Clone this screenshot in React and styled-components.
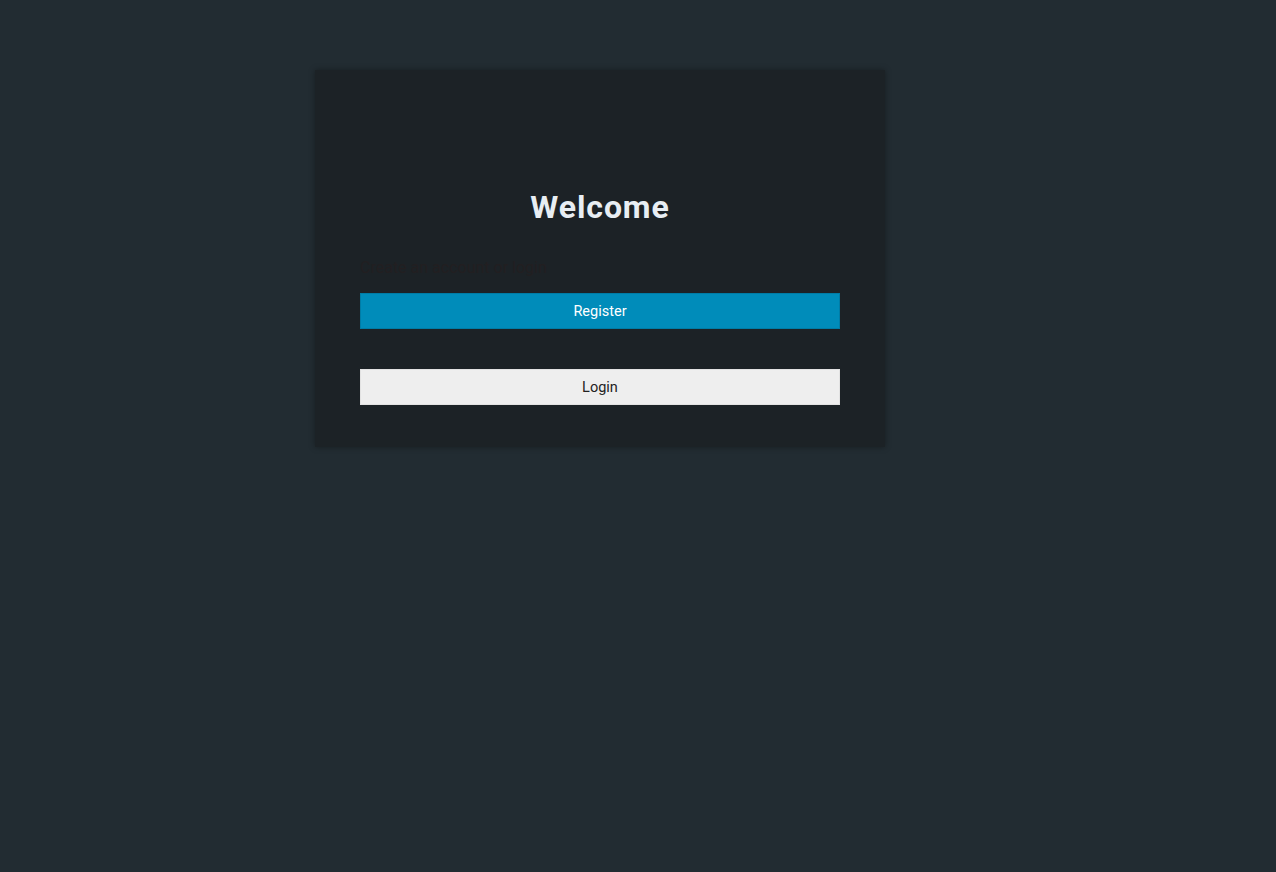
import styled, { createGlobalStyle } from "styled-components";

const GlobalStyle = createGlobalStyle`
  html, body {
    margin: 0;
    padding: 0;
    background: #222c32;
    font-family: Roboto, "Liberation Sans", sans-serif;
  }
`;

const Page = styled.div`
  min-height: 872px;
  display: flex;
  justify-content: center;
  align-items: flex-start;
  padding-top: 70px;
  padding-right: 76px;
  box-sizing: border-box;
`;

const Card = styled.div`
  width: 570px;
  background: #1c2226;
  box-shadow: 0 0 6px rgba(0, 0, 0, 0.35);
  padding: 117px 45px 42px;
  box-sizing: border-box;
  display: flex;
  flex-direction: column;
`;

const Title = styled.h1`
  margin: 0;
  text-align: center;
  font-family: Roboto, "Liberation Sans", sans-serif;
  font-weight: 700;
  font-size: 32px;
  line-height: 40px;
  letter-spacing: 0.9px;
  color: #e8eef3;
`;

const Subtitle = styled.p`
  margin: 30px 0 14px;
  font-family: Roboto, "Liberation Sans", sans-serif;
  font-size: 16px;
  line-height: 22px;
  color: #221f21;
`;

const Button = styled.button`
  display: block;
  width: 100%;
  height: 36px;
  margin: 0 0 ${p => p.$gap || 0}px;
  padding: 0;
  border: 1px solid ${p => (p.$primary ? "#007ca6" : "#e2e2e2")};
  background: ${p => (p.$primary ? "#008cba" : "#eeeeee")};
  color: ${p => (p.$primary ? "#ffffff" : "#222222")};
  font-family: Roboto, "Liberation Sans", sans-serif;
  font-size: 14.5px;
  cursor: pointer;
`;

export default function App() {
  return (
    <>
      <GlobalStyle />
      <Page>
        <Card>
          <Title>Welcome</Title>
          <Subtitle>Create an account or login</Subtitle>
          <Button $primary $gap={40}>Register</Button>
          <Button>Login</Button>
        </Card>
      </Page>
    </>
  );
}
